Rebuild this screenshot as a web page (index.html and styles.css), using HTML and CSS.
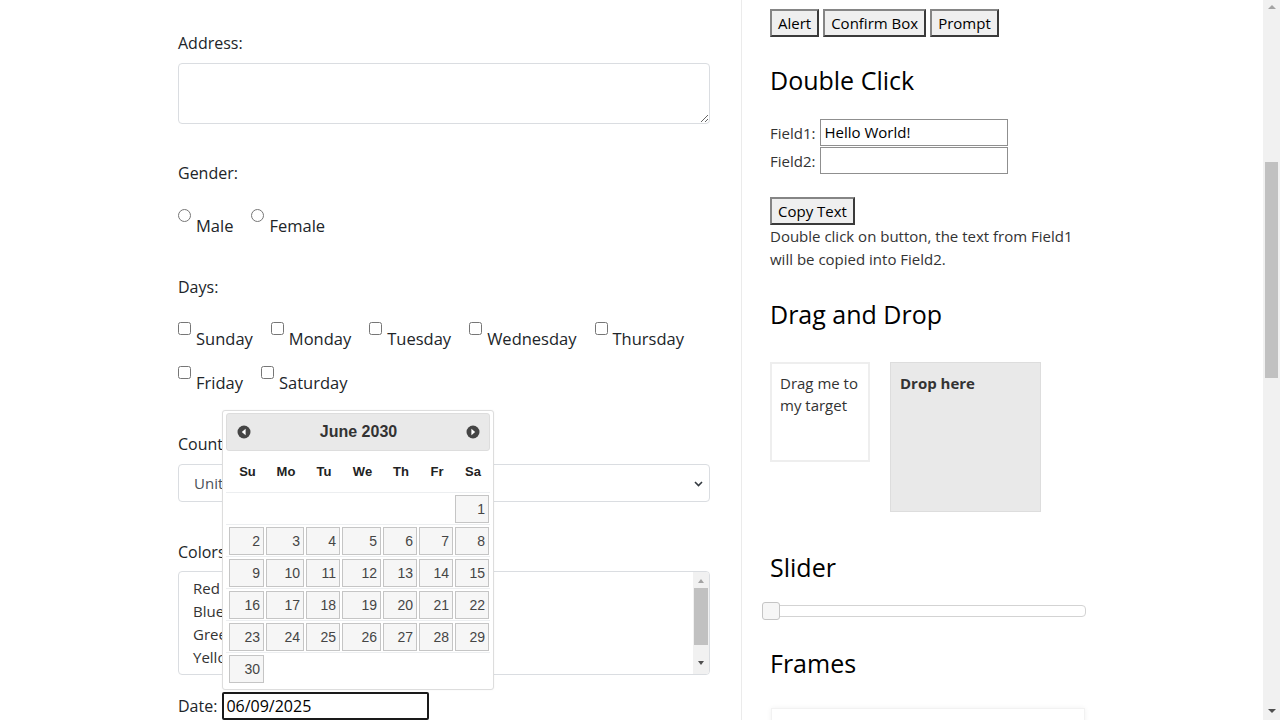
FILE: index.html
```html
<!DOCTYPE html>
<html lang="en">
<head>
<meta charset="utf-8">
<title>Automation Practice</title>
<link rel="stylesheet" href="styles.css">
</head>
<body>
<div class="page">
  <div class="content">
    <section class="left">
      <label class="lbl" for="addr">Address:</label>
      <textarea id="addr" class="ta"></textarea>

      <div class="lbl gap-37">Gender:</div>
      <div class="opts gap-24">
        <label class="opt"><input type="radio" name="g"><span>Male</span></label>
        <label class="opt"><input type="radio" name="g"><span>Female</span></label>
      </div>

      <div class="lbl gap-37">Days:</div>
      <div class="opts days gap-23">
        <label class="opt"><input type="checkbox"><span>Sunday</span></label>
        <label class="opt"><input type="checkbox"><span>Monday</span></label>
        <label class="opt"><input type="checkbox"><span>Tuesday</span></label>
        <label class="opt"><input type="checkbox"><span>Wednesday</span></label>
        <label class="opt"><input type="checkbox"><span>Thursday</span></label>
        <label class="opt"><input type="checkbox"><span>Friday</span></label>
        <label class="opt"><input type="checkbox"><span>Saturday</span></label>
      </div>

      <div class="lbl gap-37">Country:</div>
      <div class="select-wrap">
        <div class="select">United States</div>
        <svg class="chev" width="9" height="6" viewBox="0 0 9 6"><path d="M1 1 L4.5 4.5 L8 1" fill="none" stroke="#343a40" stroke-width="1.6"/></svg>
      </div>

      <div class="lbl gap-38">Colors:</div>
      <div class="listbox">
        <div class="items">
          <div>Red</div>
          <div>Blue</div>
          <div>Green</div>
          <div>Yellow</div>
        </div>
        <div class="lb-scroll">
          <span class="tri up small"></span>
          <span class="lb-thumb"></span>
          <span class="tri down small"></span>
        </div>
      </div>

      <div class="date-row">
        <span>Date:</span>
        <div class="date-input">06/09/2025</div>
      </div>
    </section>

    <section class="right">
      <div class="btns">
        <button class="btn">Alert</button>
        <button class="btn">Confirm Box</button>
        <button class="btn">Prompt</button>
      </div>

      <h3 class="h gap-29">Double Click</h3>
      <div class="frow frow-first"><span>Field1:</span><div class="tin">Hello World!</div></div>
      <div class="frow"><span>Field2:</span><div class="tin"></div></div>
      <button class="btn copy">Copy Text</button>
      <p class="desc">Double click on button, the text from Field1<br>will be copied into Field2.</p>

      <h3 class="h gap-29">Drag and Drop</h3>
      <div class="dnd">
        <div class="drag">Drag me to<br>my target</div>
        <div class="drop"><b>Drop here</b></div>
      </div>

      <h3 class="h gap-41">Slider</h3>
      <div class="slider"><span class="handle"></span></div>

      <h3 class="h gap-32">Frames</h3>
      <div class="frame"></div>
    </section>
  </div>

  <div class="vscroll">
    <span class="tri up"></span>
    <span class="vthumb"></span>
    <span class="tri down bottom"></span>
  </div>

  <div class="dp">
    <div class="dp-head">
      <svg class="dp-ico" width="14" height="14" viewBox="0 0 14 14"><circle cx="7" cy="7" r="6.5" fill="#454545"/><path d="M8.6 3.8 L4.8 7 L8.6 10.2 Z" fill="#fff"/></svg>
      <span class="dp-title">June 2030</span>
      <svg class="dp-ico" width="14" height="14" viewBox="0 0 14 14"><circle cx="7" cy="7" r="6.5" fill="#454545"/><path d="M5.4 3.8 L9.2 7 L5.4 10.2 Z" fill="#fff"/></svg>
    </div>
    <div class="dp-row dp-dow">
      <span>Su</span><span>Mo</span><span>Tu</span><span>We</span><span>Th</span><span>Fr</span><span>Sa</span>
    </div>
    <div class="dp-row">
      <span class="e"></span><span class="e"></span><span class="e"></span><span class="e"></span><span class="e"></span><span class="e"></span><span>1</span>
    </div>
    <div class="dp-row">
      <span>2</span><span>3</span><span>4</span><span>5</span><span>6</span><span>7</span><span>8</span>
    </div>
    <div class="dp-row">
      <span>9</span><span>10</span><span>11</span><span>12</span><span>13</span><span>14</span><span>15</span>
    </div>
    <div class="dp-row">
      <span>16</span><span>17</span><span>18</span><span>19</span><span>20</span><span>21</span><span>22</span>
    </div>
    <div class="dp-row">
      <span>23</span><span>24</span><span>25</span><span>26</span><span>27</span><span>28</span><span>29</span>
    </div>
    <div class="dp-row">
      <span>30</span><span class="e"></span><span class="e"></span><span class="e"></span><span class="e"></span><span class="e"></span><span class="e"></span>
    </div>
  </div>
</div>
</body>
</html>
```

FILE: styles.css
```css
* { box-sizing: border-box; }
html, body { margin: 0; padding: 0; }
body {
  width: 1280px;
  height: 720px;
  overflow: hidden;
  background: #fff;
  font-family: "Open Sans", "Noto Sans", sans-serif;
  font-size: 15px;
  color: #212529;
}
.page {
  position: relative;
  display: flex;
  width: 1280px;
  height: 720px;
  overflow: hidden;
}
.content { flex: 1; display: flex; }

/* left column */
.left {
  width: 741px;
  flex: none;
  padding: 31px 31px 0 178px;
}
.lbl { display: block; line-height: 24px; font-size: 16px; }
.gap-37 { margin-top: 37px; }
.gap-24 { margin-top: 24px; }
.gap-23 { margin-top: 23px; }
.gap-38 { margin-top: 38px; }
.gap-29 { margin-top: 29px; }
.gap-41 { margin-top: 41px; }
.gap-32 { margin-top: 32px; }

.ta {
  display: block;
  width: 532px;
  height: 61px;
  margin: 8px 0 0;
  border: 1px solid #dadde1;
  border-radius: 4px;
  resize: vertical;
  font: inherit;
}
.opts {
  display: flex;
  flex-wrap: wrap;
  column-gap: 18px;
  row-gap: 15px;
}
.opt {
  display: inline-flex;
  align-items: flex-start;
  line-height: 24px;
  font-size: 16.5px;
}
.opt input {
  width: 13px;
  height: 13px;
  margin: 0 5px 0 0;
}
.opt span { margin-top: 5px; }

.select-wrap { position: relative; margin-top: 8px; }
.select {
  height: 38px;
  border: 1px solid #dadde1;
  border-radius: 4px;
  padding: 0 15px;
  line-height: 36px;
  color: #495057;
}
.chev { position: absolute; right: 7px; top: 17px; }

.listbox {
  margin-top: 7px;
  height: 104px;
  border: 1px solid #dadde1;
  border-radius: 4px;
  display: flex;
  overflow: hidden;
}
.items {
  flex: 1;
  padding: 5px 14px 0;
  line-height: 23px;
  color: #333;
}
.lb-scroll {
  width: 16px;
  background: #f1f1f1;
  display: flex;
  flex-direction: column;
  align-items: center;
  padding-top: 7px;
}
.lb-thumb {
  width: 14px;
  height: 57px;
  background: #c1c1c1;
  margin-top: 5px;
}
.lb-scroll .down { margin-top: auto; margin-bottom: 9px; }

.tri { display: block; width: 0; height: 0; border-left: 4px solid transparent; border-right: 4px solid transparent; }
.tri.up { border-bottom: 4px solid #a3a3a3; }
.tri.down { border-top: 4px solid #505050; }
.tri.small.up { border-left-width: 3.5px; border-right-width: 3.5px; border-bottom-color: #a3a3a3; }
.tri.small.down { border-left-width: 3.5px; border-right-width: 3.5px; }

.date-row {
  margin-top: 17px;
  display: flex;
  align-items: center;
  gap: 5px;
  font-size: 16px;
}
.date-input {
  width: 207px;
  height: 28px;
  border: 2px solid #1a1a1a;
  border-radius: 2px;
  padding: 0 2px;
  line-height: 24px;
  color: #000;
}

/* right column */
.right {
  flex: 1;
  border-left: 1px solid #ebebeb;
  padding: 9px 0 0 28px;
}
.btns { display: flex; gap: 4px; }
.btn {
  font-family: inherit;
  font-size: 15px;
  height: 28px;
  padding: 0 6px;
  background: #efefef;
  color: #000;
  border: 2px solid;
  border-color: #858585 #3a3a3a #3a3a3a #858585;
  line-height: 22px;
}
.h {
  margin-bottom: 0;
  font-size: 25px;
  font-weight: 400;
  line-height: 29px;
  color: #000;
}
.frow {
  display: flex;
  align-items: center;
  gap: 5px;
  color: #333;
  margin-top: 1px;
}
.frow-first { margin-top: 24px; }
.tin {
  width: 188px;
  height: 27px;
  border: 1px solid #8f8f8f;
  padding: 0 3px;
  line-height: 25px;
  color: #000;
}
.copy { display: block; margin-top: 23px; }
.desc {
  margin: 0;
  line-height: 23px;
  color: #333;
}
.dnd { display: flex; align-items: flex-start; gap: 20px; margin-top: 33px; }
.drag {
  width: 100px;
  height: 100px;
  border: 2px solid #eee;
  padding: 8px;
  line-height: 22px;
  color: #333;
}
.drop {
  width: 151px;
  height: 150px;
  background: #e9e9e9;
  border: 1px solid #dddddd;
  padding: 9px;
  line-height: 22px;
  color: #333;
}
.slider {
  position: relative;
  margin: 23px 0 0 -8px;
  width: 324px;
  height: 12px;
  border: 1px solid #d3d3d3;
  border-radius: 4px;
  background: #fff;
}
.handle {
  position: absolute;
  left: -1px;
  top: -4px;
  width: 18px;
  height: 18px;
  border: 1px solid #c5c5c5;
  border-radius: 3px;
  background: #f6f6f6;
}
.frame {
  margin: 30px 0 0 1px;
  width: 314px;
  height: 200px;
  border: 1px solid #f2f2f2;
  box-shadow: 0 0 5px rgba(0,0,0,0.06);
}

/* page scrollbar */
.vscroll {
  width: 17px;
  flex: none;
  background: #f1f1f1;
  display: flex;
  flex-direction: column;
  align-items: center;
  padding-top: 5px;
}
.vthumb {
  width: 13px;
  height: 216px;
  background: #c1c1c1;
  margin-top: 153px;
}
.vscroll .bottom { margin-top: auto; margin-bottom: 7px; }

/* datepicker popup */
.dp {
  position: absolute;
  left: 222px;
  top: 410px;
  width: 272px;
  height: 280px;
  background: #fff;
  border: 1px solid #dddddd;
  border-radius: 3px;
  padding: 2px 3px;
  font-family: "Liberation Sans", Arial, sans-serif;
  box-shadow: 0 0 2px rgba(0,0,0,0.05);
}
.dp-head {
  height: 38px;
  background: #e9e9e9;
  border: 1px solid #dddddd;
  border-radius: 3px;
  display: flex;
  align-items: center;
  justify-content: space-between;
  padding: 0 9px 0 10px;
}
.dp-title {
  font-weight: 700;
  font-size: 16px;
  color: #333;
}
.dp-row {
  display: grid;
  grid-template-columns: 37px 40px 36px 41px 36px 36px 36px;
  padding: 2px 0 1px 3px;
  border-top: 1px solid #eceef0;
}
.dp-row span {
  margin-right: 2px;
  height: 28px;
  border: 1px solid #c5c5c5;
  background: #f6f6f6;
  color: #454545;
  font-size: 14px;
  line-height: 26px;
  text-align: right;
  padding-right: 3px;
}
.dp-row span.e { border: 0; background: transparent; }
.dp-row.dp-dow { border-top: 0; padding: 0 0 0 3px; height: 41px; }
.dp-row.dp-dow span {
  height: 41px;
  margin-right: 0;
  border: 0;
  background: transparent;
  text-align: center;
  padding: 0;
  line-height: 41px;
  font-size: 13px;
  font-weight: 700;
  color: #222;
}
```
